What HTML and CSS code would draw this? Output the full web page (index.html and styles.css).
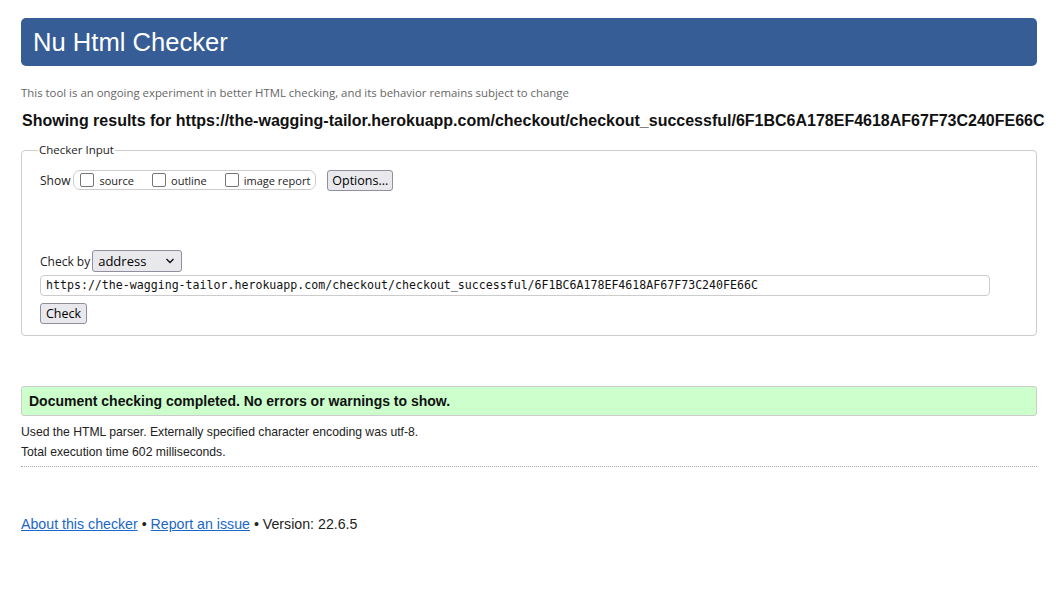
FILE: index.html
```html
<!DOCTYPE html>
<html>
<head>
<meta charset="utf-8">
<title>Nu Html Checker</title>
<link rel="stylesheet" href="styles.css">
</head>
<body>
<div class="page">
  <h1 class="banner">Nu Html Checker</h1>
  <p class="tagline">This tool is an ongoing experiment in better HTML checking, and its behavior remains subject to change</p>
  <p class="showing">Showing results for https://the-wagging-tailor.herokuapp.com/checkout/checkout_successful/6F1BC6A178EF4618AF67F73C240FE66C</p>
  <fieldset class="checker">
    <legend class="legend">Checker Input</legend>
    <div class="show-row">
      <span class="lbl">Show</span>
      <span class="show-group">
        <label class="opt"><span class="box"></span>source</label>
        <label class="opt"><span class="box"></span>outline</label>
        <label class="opt"><span class="box"></span>image report</label>
      </span>
      <span class="btn btn-options">Options...</span>
    </div>
    <div class="spacer"></div>
    <div class="by-row">
      <span class="lbl">Check by</span>
      <span class="select">address<svg class="chev" width="10" height="6" viewBox="0 0 10 6"><path d="M1.5 1 L5 4.5 L8.5 1" fill="none" stroke="#111" stroke-width="1.4"/></svg></span>
    </div>
    <div class="url">https://the-wagging-tailor.herokuapp.com/checkout/checkout_successful/6F1BC6A178EF4618AF67F73C240FE66C</div>
    <div class="check-row"><span class="btn btn-check">Check</span></div>
  </fieldset>
  <div class="success">Document checking completed. No errors or warnings to show.</div>
  <div class="details-block">
    <p class="details">Used the HTML parser. Externally specified character encoding was utf-8.</p>
    <p class="details">Total execution time 602 milliseconds.</p>
  </div>
  <div class="rule"></div>
  <p class="footer"><a href="#">About this checker</a> • <a href="#">Report an issue</a> • Version: 22.6.5</p>
</div>
</body>
</html>
```
FILE: styles.css
```css
html, body {
  margin: 0;
  padding: 0;
  background: #fff;
}
body {
  font-family: "Liberation Sans", Arial, sans-serif;
  color: #222;
}
.page {
  padding: 18px 19px 0 21px;
}
.banner {
  margin: 0;
  height: 48px;
  background: #365d95;
  color: #fff;
  border-radius: 5px;
  font-weight: normal;
  font-size: 25.6px;
  line-height: 48px;
  padding-left: 12px;
}
.tagline {
  margin: 19px 0 0 0;
  font-family: "Open Sans", sans-serif;
  font-size: 11.4px;
  color: #666;
  line-height: 16px;
}
.showing {
  margin: 10px 0 0 1px;
  font-weight: bold;
  font-size: 16px;
  line-height: 20px;
  white-space: nowrap;
  color: #111;
}
.checker {
  margin: 12px 0 0 0;
  border: 1px solid #ccc;
  border-radius: 4px;
  padding: 13px 18px 11px 18px;
  font-family: "Open Sans", sans-serif;
  font-size: 12px;
  color: #222;
}
.legend {
  padding: 0 1px;
  margin-left: -2px;
  font-size: 11.5px;
  line-height: 14px;
}
.show-row {
  display: flex;
  align-items: center;
  height: 20px;
}
.lbl {
  margin-right: 2px;
  font-size: 12px;
}
.show-group {
  display: flex;
  align-items: center;
  height: 18px;
  border: 1px solid #ccc;
  border-radius: 7px;
  padding: 0 5px 0 6px;
  margin-left: 1px;
  gap: 18px;
}
.opt {
  display: flex;
  align-items: center;
  font-size: 11px;
}
.box {
  width: 12px;
  height: 12px;
  border: 1px solid #767676;
  border-radius: 2px;
  margin-right: 5px;
}
.btn {
  display: inline-flex;
  align-items: center;
  justify-content: center;
  background: #e9e9ed;
  border: 1px solid #8f8f9d;
  border-radius: 3px;
  font-size: 12.5px;
  color: #000;
  box-sizing: border-box;
}
.btn-options {
  margin-left: 11px;
  width: 66px;
  height: 21px;
}
.spacer {
  height: 60px;
}
.by-row {
  display: flex;
  align-items: center;
  height: 22px;
}
.select {
  display: inline-flex;
  align-items: center;
  justify-content: space-between;
  box-sizing: border-box;
  width: 90px;
  height: 22px;
  background: #e9e9ed;
  border: 1px solid #8f8f9d;
  border-radius: 3px;
  padding: 0 6px 0 5px;
  font-size: 13px;
  color: #000;
}
.chev {
  display: block;
}
.url {
  margin-top: 3px;
  box-sizing: border-box;
  width: 950px;
  height: 21px;
  border: 1px solid #ccc;
  border-radius: 4px;
  padding: 0 5px;
  font-family: "DejaVu Sans Mono", monospace;
  font-size: 11.6px;
  line-height: 19px;
  color: #111;
  white-space: nowrap;
}
.check-row {
  margin-top: 7px;
  display: flex;
}
.btn-check {
  width: 47px;
  height: 21px;
}
.success {
  margin-top: 50px;
  box-sizing: border-box;
  height: 30px;
  background: #ccffcc;
  border: 1px solid #ccc;
  border-radius: 3px;
  padding-left: 7px;
  font-weight: bold;
  font-size: 14px;
  line-height: 28px;
  color: #111;
}
.details-block {
  margin-top: 6px;
}
.details {
  margin: 0;
  font-size: 12.2px;
  line-height: 20px;
  color: #222;
}
.rule {
  margin-top: 4px;
  border-bottom: 1px dotted #aaa;
}
.footer {
  margin: 48px 0 0 0;
  font-size: 14.2px;
  line-height: 18px;
  color: #222;
}
.footer a {
  color: #1a66c9;
}
```
